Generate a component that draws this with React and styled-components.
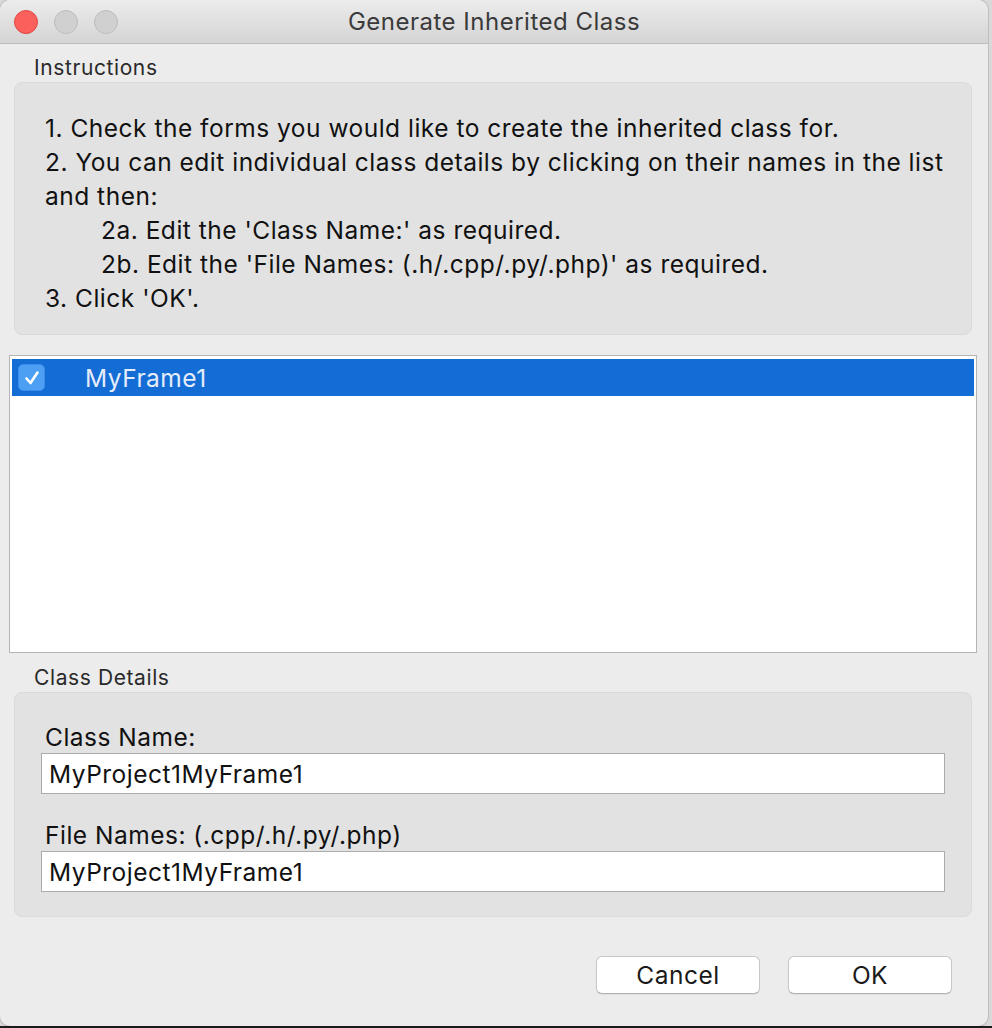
import React from "react";
import styled, { createGlobalStyle } from "styled-components";

const GlobalStyle = createGlobalStyle`
  html, body { margin: 0; padding: 0; }
  body {
    background: linear-gradient(to bottom, #d9d9d9 0, #d9d9d9 1026px, #1c1c1c 1026px);
    font-family: Inter, "Liberation Sans", sans-serif;
    min-height: 1028px;
  }
`;

const Window = styled.div`
  width: 988px;
  height: 1026px;
  background: #ececec;
  border-radius: 10px;
  overflow: hidden;
  display: flex;
  flex-direction: column;
  box-shadow: 0 0 0 1px rgba(0,0,0,0.12);
`;

const TitleBar = styled.div`
  height: 43px;
  border-bottom: 1px solid #bdbdbd;
  background: linear-gradient(to bottom, #ececec, #d4d4d4);
  display: grid;
  grid-template-columns: 1fr auto 1fr;
  align-items: center;
`;

const Lights = styled.div`
  display: flex;
  gap: 16px;
  padding-left: 14px;
`;

const Light = styled.span`
  width: 24px;
  height: 24px;
  border-radius: 50%;
  box-sizing: border-box;
  background: ${(p) => (p.$red ? "#fc605c" : "#d0d0d0")};
  border: 1px solid ${(p) => (p.$red ? "#de4843" : "#bcbcbc")};
`;

const Title = styled.div`
  font-size: 24px;
  letter-spacing: 0.5px;
  color: #3a3a3a;
`;

const Body = styled.div`
  flex: 1;
  display: flex;
  flex-direction: column;
`;

const GroupLabel = styled.div`
  font-size: 21px;
  letter-spacing: 0.6px;
  line-height: 24px;
  color: #2a2a2a;
  margin: ${(p) => p.$mt}px 0 2px 34px;
`;

const GroupBox = styled.div`
  margin: 0 16px 0 14px;
  background: #e2e2e2;
  border: 1px solid #dadada;
  border-radius: 8px;
  box-sizing: border-box;
`;

const InstructionBox = styled(GroupBox)`
  height: 253px;
  padding: 28px 10px 0 30px;
`;

const bodyText = `
  font-size: 24.5px;
  letter-spacing: 0.5px;
`;

const Line = styled.div`
  ${bodyText}
  line-height: 34px;
  color: #111;
  white-space: nowrap;
  padding-left: ${(p) => (p.$indent ? 56 : 0)}px;
`;

const List = styled.div`
  margin: 20px 11px 0 9px;
  height: 298px;
  box-sizing: border-box;
  border: 1px solid #b4b4b4;
  background: #fff;
  padding: 3px 2px;
`;

const Row = styled.div`
  height: 37px;
  background: ${(p) => (p.$selected ? "#146cd5" : "transparent")};
  display: flex;
  align-items: center;
  padding-left: 6px;
  gap: 40px;
`;

const Check = styled.span`
  width: 27px;
  height: 27px;
  border-radius: 5px;
  box-sizing: border-box;
  background: #4d9ff4;
  border: 1px solid #3b8ceb;
  display: flex;
  align-items: center;
  justify-content: center;
`;

const RowText = styled.span`
  ${bodyText}
  color: #e4ecfa;
`;

const DetailsBox = styled(GroupBox)`
  height: 225px;
  padding: 29px 26px 0 26px;
  display: flex;
  flex-direction: column;
`;

const FieldLabel = styled.div`
  ${bodyText}
  line-height: 30px;
  color: #111;
  padding-left: 4px;
  margin-top: ${(p) => p.$mt || 0}px;
`;

const Input = styled.div`
  ${bodyText}
  margin-top: 1px;
  height: 41px;
  box-sizing: border-box;
  background: #fff;
  border: 1px solid #ababab;
  display: flex;
  align-items: center;
  padding-left: 7px;
  color: #111;
`;

const Buttons = styled.div`
  display: flex;
  justify-content: flex-end;
  gap: 28px;
  margin: 39px 36px 0 0;
`;

const Button = styled.div`
  ${bodyText}
  width: 164px;
  height: 38px;
  box-sizing: border-box;
  background: #fff;
  border: 1px solid #c6c6c6;
  border-bottom-color: #b2b2b2;
  border-radius: 6px;
  box-shadow: 0 1px 1px rgba(0,0,0,0.06);
  display: flex;
  align-items: center;
  justify-content: center;
  color: #1a1a1a;
`;

export default function App() {
  return (
    <>
      <GlobalStyle />
      <Window>
        <TitleBar>
          <Lights>
            <Light $red />
            <Light />
            <Light />
          </Lights>
          <Title>Generate Inherited Class</Title>
          <div />
        </TitleBar>
        <Body>
          <GroupLabel $mt={12}>Instructions</GroupLabel>
          <InstructionBox>
            <Line>1. Check the forms you would like to create the inherited class for.</Line>
            <Line>2. You can edit individual class details by clicking on their names in the list</Line>
            <Line>and then:</Line>
            <Line $indent>2a. Edit the 'Class Name:' as required.</Line>
            <Line $indent>2b. Edit the 'File Names: (.h/.cpp/.py/.php)' as required.</Line>
            <Line>3. Click 'OK'.</Line>
          </InstructionBox>
          <List>
            <Row $selected>
              <Check>
                <svg width="18" height="18" viewBox="0 0 18 18">
                  <path d="M3.5 9.5 L7.5 14 L14.5 3.5" fill="none" stroke="#fff" strokeWidth="2.6" strokeLinecap="round" strokeLinejoin="round" />
                </svg>
              </Check>
              <RowText>MyFrame1</RowText>
            </Row>
          </List>
          <GroupLabel $mt={13}>Class Details</GroupLabel>
          <DetailsBox>
            <FieldLabel>Class Name:</FieldLabel>
            <Input>MyProject1MyFrame1</Input>
            <FieldLabel $mt={26}>File Names: (.cpp/.h/.py/.php)</FieldLabel>
            <Input>MyProject1MyFrame1</Input>
          </DetailsBox>
          <Buttons>
            <Button>Cancel</Button>
            <Button>OK</Button>
          </Buttons>
        </Body>
      </Window>
    </>
  );
}
